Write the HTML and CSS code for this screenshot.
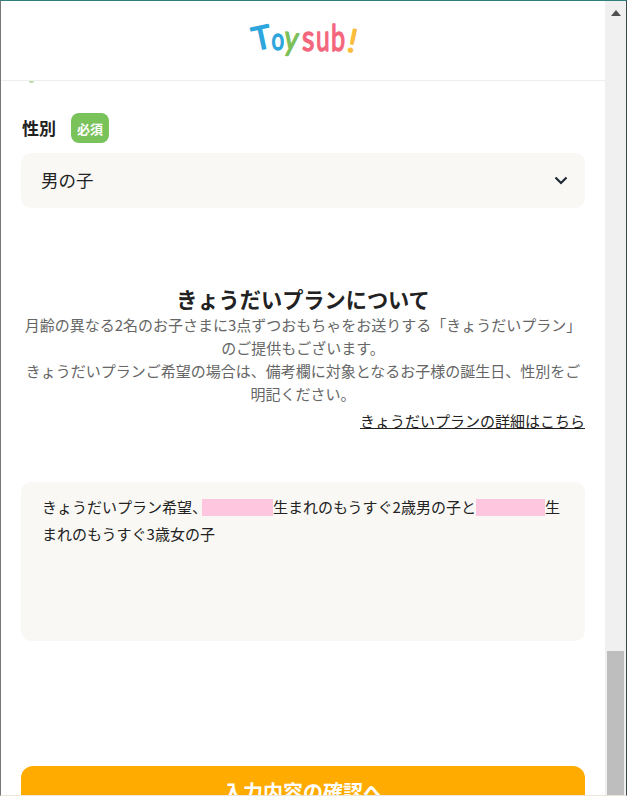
FILE: index.html
```html
<!DOCTYPE html>
<html lang="ja">
<head>
    <meta charset="UTF-8">
    <meta name="viewport" content="width=device-width, initial-scale=1.0">
    <title>Toysub!</title>
    <link rel="stylesheet" href="styles.css">
</head>
<body>
    <div class="window">
        <div class="page">
            <header class="site-header">
                <svg class="logo" width="120" height="49" viewBox="0 0 120 49" aria-label="Toysub!">
                    <text class="logo-t" transform="translate(9 33) rotate(-12 10 -12)">T</text>
                    <text class="logo-o" transform="translate(28.500 34) scale(.72 1)">o</text>
                    <text class="logo-y" transform="translate(40 33) rotate(8) scale(.8 1)">y</text>
                    <text class="logo-r" transform="translate(59 35) scale(.8 1)">s</text>
                    <text class="logo-r" transform="translate(73 35) scale(.68 1)">u</text>
                    <text class="logo-r" transform="translate(88 35) scale(.7 1)">b</text>
                    <text class="logo-ex" transform="translate(103 35) rotate(12)">!</text>
                </svg>
            </header>
            <main class="form">
                <div class="clipped-mark"></div>
                <div class="field-label">
                    <span class="label-text">性別</span>
                    <span class="badge">必須</span>
                </div>
                <div class="select">
                    <span class="select-value">男の子</span>
                    <svg class="chevron" width="14" height="9" viewBox="0 0 14 9">
                        <path d="M1.5 1.5 7 7l5.500-5.500" fill="none" stroke="#1f2933" stroke-width="2.200"/>
                    </svg>
                </div>
                <section class="notice">
                    <h2 class="notice-title">きょうだいプランについて</h2>
                    <p class="notice-text">月齢の異なる2名のお子さまに3点ずつおもちゃをお送りする「きょうだいプラン」のご提供もございます。<br>きょうだいプランご希望の場合は、備考欄に対象となるお子様の誕生日、性別をご明記ください。</p>
                    <div class="notice-link"><a href="#">きょうだいプランの詳細はこちら</a></div>
                </section>
                <div class="textarea">きょうだいプラン希望、<span class="masked masked-first"></span>生まれのもうすぐ2歳男の子と<span class="masked"></span>生まれのもうすぐ3歳女の子</div>
                <button class="submit">入力内容の確認へ</button>
            </main>
        </div>
        <div class="scrollbar">
            <svg class="scroll-up" width="10" height="6" viewBox="0 0 10 6"><path d="M5 0 10 6H0z" fill="#505050"/></svg>
            <div class="scroll-thumb"></div>
        </div>
    </div>
</body>
</html>
```

FILE: styles.css
```css
html, body {
    margin: 0;
    padding: 0;
    height: 796px;
    overflow: hidden;
    background: #fff;
}
.window {
    box-sizing: border-box;
    height: 796px;
    display: flex;
    border-top: 1px solid #2f7f7c;
    border-left: 1px solid #777;
    border-right: 1px solid #3a4a4a;
    border-bottom: 1px solid #ece6da;
    font-family: "Noto Sans CJK JP", "Noto Sans", sans-serif;
    color: #222;
}
.page {
    width: 604px;
    overflow: hidden;
    background: #fff;
}
.site-header {
    box-sizing: border-box;
    height: 80px;
    display: flex;
    justify-content: center;
    align-items: center;
    border-bottom: 1px solid #eeeeea;
}
.logo text {
    font-family: "Lato", sans-serif;
    font-size: 36px;
    font-weight: 400;
    stroke-width: 1.4px;
    stroke-linejoin: round;
    stroke-linecap: round;
}
.logo .logo-t {
    font-size: 32px;
    fill: #2ca6dc;
    stroke: #2ca6dc;
}
.logo .logo-o {
    font-size: 31px;
    fill: #2ca6dc;
    stroke: #2ca6dc;
}
.logo .logo-y {
    font-size: 34px;
    fill: #7cc05a;
    stroke: #7cc05a;
}
.logo-r {
    fill: #f4667c;
    stroke: #f4667c;
}
.logo .logo-ex {
    font-size: 32px;
    fill: #fbbd3c;
    stroke: #fbbd3c;
}
.form {
    padding: 0 20px;
}
.clipped-mark {
    width: 5px;
    height: 2px;
    margin: 0 0 30px 8px;
    background: #b9dcaa;
    border-radius: 0 0 3px 3px;
}
.field-label {
    display: flex;
    align-items: center;
    gap: 15px;
    margin-left: 1px;
    height: 30px;
    margin-bottom: 10px;
}
.label-text {
    padding-bottom: 2px;
    font-size: 17px;
    font-weight: 700;
}
.badge {
    width: 38px;
    height: 30px;
    display: flex;
    justify-content: center;
    align-items: center;
    background: #7ac25a;
    border-radius: 8px;
    color: #fff;
    font-size: 13px;
    font-weight: 700;
}
.select {
    box-sizing: border-box;
    height: 55px;
    padding: 0 17px 0 20px;
    display: flex;
    justify-content: space-between;
    align-items: center;
    background: #f9f8f4;
    border-radius: 10px;
    font-size: 17.5px;
}
.select-value {
    padding-bottom: 3px;
}
.notice {
    margin-top: 77px;
}
.notice-title {
    margin: 0;
    text-align: center;
    font-size: 21.2px;
    line-height: 28px;
    font-weight: 700;
}
.notice-text {
    margin: 0;
    text-align: center;
    font-size: 15px;
    line-height: 23px;
    color: #666;
}
.notice-link {
    margin-top: 4px;
    text-align: right;
    font-size: 15px;
    line-height: 23px;
}
.notice-link a {
    color: #222;
}
.textarea {
    box-sizing: border-box;
    height: 159px;
    margin-top: 50px;
    padding: 11px 21px;
    background: #f9f8f4;
    border-radius: 10px;
    font-size: 15px;
    line-height: 27px;
}
.masked {
    display: inline-block;
    width: 69px;
    height: 17px;
    vertical-align: -3px;
    background: #ffc6e0;
}
.masked-first {
    width: 71px;
    margin-left: -5px;
}
.submit {
    display: block;
    width: 100%;
    height: 56px;
    margin-top: 125px;
    padding: 0 0 6px;
    border: 0;
    border-radius: 12px;
    background: #ffab00;
    color: #fff;
    font-family: inherit;
    font-size: 20px;
    font-weight: 700;
}
.scrollbar {
    position: relative;
    flex: 1;
    background: #f0f0f0;
}
.scroll-up {
    position: absolute;
    top: 9px;
    left: 6px;
}
.scroll-thumb {
    position: absolute;
    left: 2px;
    right: 2px;
    top: 650px;
    bottom: 0;
    background: #bebebe;
}
```
